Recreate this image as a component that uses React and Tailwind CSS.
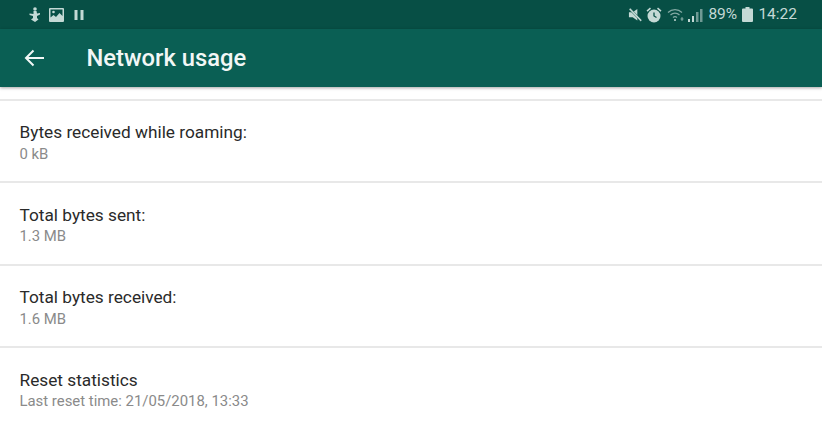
const rows = [
  ["Bytes received while roaming:", "0 kB"],
  ["Total bytes sent:", "1.3 MB"],
  ["Total bytes received:", "1.6 MB"],
  ["Reset statistics", "Last reset time: 21/05/2018, 13:33"],
];

function Row({ title, sub, last }) {
  return (
    <div className={`h-[82.67px] pl-[19.5px] pt-[20.5px] ${last ? "" : "border-b-2 border-[#e8e8e8]"}`}>
      <div className="text-[17.25px] leading-[22px] text-[#2a2a2a]">{title}</div>
      <div className="mt-[0.5px] text-[14.9px] leading-[20px] text-[#8a8a8a]">{sub}</div>
    </div>
  );
}

export default function App() {
  return (
    <div className="w-[822px] h-[429px] overflow-hidden bg-white font-['Roboto',sans-serif]">
      <div className="h-[29px] bg-[#074f45] flex items-center justify-between pl-[28px] pr-[25px] text-[#c4d9d5]">
        <div className="flex items-center gap-[8px]">
          <svg width="13" height="15" viewBox="0 0 13 15" fill="currentColor">
            <circle cx="7" cy="2" r="1.800" />
            <path d="M5.500 4h3l.5 2.500L12 6v1.500L9 9v2l1.500 1.500L7 15l-4-2.500L5 11V9L1.500 8V6.500l4 .5z" />
          </svg>
          <svg width="15" height="14" viewBox="0 0 15 14" fill="currentColor">
            <path fillRule="evenodd" d="M1 0h13a1 1 0 0 1 1 1v12a1 1 0 0 1-1 1H1a1 1 0 0 1-1-1V1a1 1 0 0 1 1-1zm.5 1.500v8l3-2.500 2.500 2 3.500-4 3 3V1.500z" />
            <circle cx="4.500" cy="4" r="1.300" />
          </svg>
          <svg width="10" height="10" viewBox="0 0 10 10" fill="currentColor" className="ml-[2px]">
            <rect x="0.500" y="0" width="3" height="10" />
            <rect x="6.500" y="0" width="3" height="10" />
          </svg>
        </div>
        <div className="flex items-center">
          <svg width="14" height="14" viewBox="0 0 15 15" fill="currentColor">
            <path d="M1 4.500h4L10 1v12.500L5 10H1z" />
            <path d="M1 1.500L2.500 0 15 13l-1.500 1.500z" stroke="#074f45" strokeWidth="0.500" />
          </svg>
          <svg width="16" height="16" viewBox="0 0 16 16" className="ml-[4px]" fill="currentColor">
            <circle cx="8" cy="9" r="6.500" />
            <path d="M0.500 3.500L4 0.500l1 1.200-3.500 3zM15.500 3.500L12 0.500l-1 1.200 3.500 3z" />
            <path d="M8 5.500V9l2.500 1.500" stroke="#074f45" strokeWidth="1.300" fill="none" />
          </svg>
          <svg width="18" height="14" viewBox="0 0 18 14" fill="none" stroke="currentColor" strokeOpacity="0.650" className="ml-[5px]">
            <path d="M1 4.500a10 10 0 0 1 14 0" strokeWidth="1.200" />
            <path d="M3.500 7a6.500 6.500 0 0 1 9 0" strokeWidth="1.200" />
            <path d="M6 9.500a3 3 0 0 1 4 0" strokeWidth="1.200" />
            <circle cx="8" cy="12" r="1" fill="currentColor" stroke="none" />
            <path d="M15 9v4M13.500 11h3" strokeWidth="1" />
          </svg>
          <svg width="15" height="14" viewBox="0 0 15 14" fill="currentColor" className="ml-[3px]">
            <rect x="0" y="11" width="2" height="3" />
            <rect x="4" y="8" width="2" height="6" />
            <rect x="8" y="4" width="2.500" height="10" opacity="0.550" />
            <rect x="12" y="1" width="2.500" height="13" opacity="0.550" />
          </svg>
          <span className="ml-[5px] w-[30px] text-[15.500px] leading-none">89%</span>
          <svg width="11" height="15" viewBox="0 0 11 15" fill="currentColor" className="ml-[4px]">
            <path d="M3.500 0h4v1.500H10a1 1 0 0 1 1 1V14a1 1 0 0 1-1 1H1a1 1 0 0 1-1-1V2.500a1 1 0 0 1 1-1h2.500z" />
          </svg>
          <span className="ml-[5px] text-[15.500px] leading-none">14:22</span>
        </div>
      </div>
      <div className="relative h-[58px] bg-[#0a5f54] flex items-center shadow-[0_1px_3px_rgba(0,0,0,0.35)]">
        <svg width="20" height="18" viewBox="0 0 20 18" fill="none" stroke="#f2f7f6" strokeWidth="2" className="ml-[24px]">
          <path d="M20 9H2M9.500 1.500L2 9l7.500 7.500" />
        </svg>
        <div className="ml-[42.500px] pt-[1px] text-[23.750px] font-medium leading-none text-[#f2f7f6]">Network usage</div>
      </div>
      <div className="h-[11.500px] border-b-2 border-[#e8e8e8] box-content" />
      {rows.map(([title, sub], i) => (
        <Row key={title} title={title} sub={sub} last={i === rows.length - 1} />
      ))}
    </div>
  );
}
